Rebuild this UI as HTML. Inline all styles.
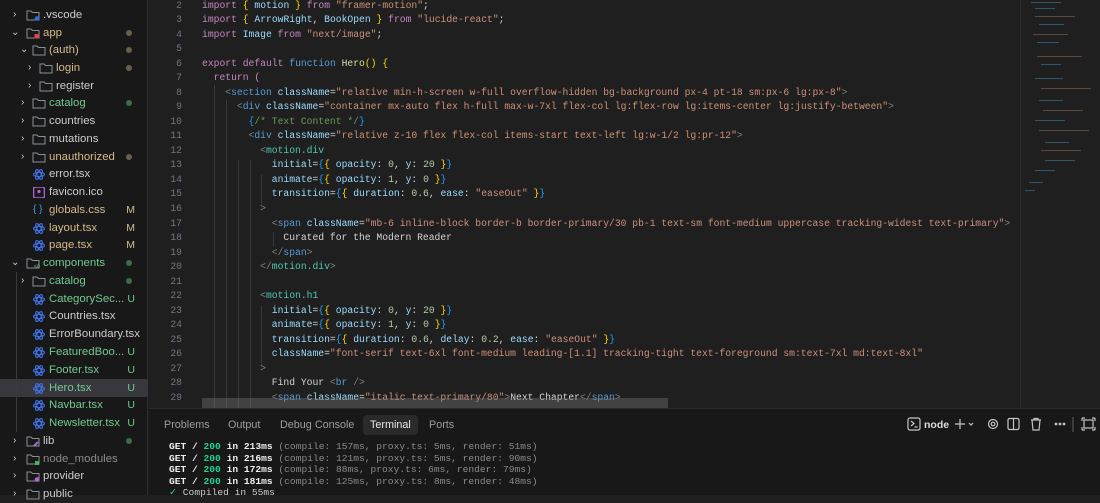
<!DOCTYPE html>
<html><head><meta charset="utf-8"><style>
*{margin:0;padding:0;box-sizing:border-box}
body{width:1100px;height:495px;overflow:hidden;background:#1f1f1f;font-family:"Liberation Sans",sans-serif;position:relative}
#side{position:absolute;left:0;top:0;width:148px;height:495px;background:#181818;border-right:1px solid #2b2b2b}
.r{position:absolute;left:0;width:148px;height:18px;font-size:11.4px;line-height:18px;color:#cccccc;white-space:nowrap}
.r .ch{position:absolute;font-size:10px;color:#ccc}
.r .ic{position:absolute;top:4px}
.r .t{position:absolute}
.r .b{position:absolute;right:13px;font-size:10.5px}
.r .d{position:absolute;right:16px;top:6px;width:6px;height:6px;border-radius:3px}
.tan{color:#d7b98a!important}.grn{color:#73c991!important}.gry{color:#8b8b8b!important}
#code{position:absolute;left:150px;top:0;width:870px;height:408px;overflow:hidden;font-family:"Liberation Mono",monospace;font-size:9.7px}
.ln{position:absolute;left:0;width:32px;text-align:right;color:#6e7681;height:14.52px;line-height:14.52px}
.cl{position:absolute;left:52px;white-space:pre;color:#d4d4d4;height:14.52px;line-height:14.52px}
.k{color:#c586c0}.bk{color:#569cd6}.y{color:#ffd700}.v{color:#9cdcfe}.s{color:#ce9178}.p{color:#808080}.c{color:#4ec9b0}.f{color:#dcdcaa}.n{color:#b5cea8}.cm{color:#6a9955}.bl{color:#179fff}
.g{position:absolute;width:1px;background:#3a3a3a}
#panel{position:absolute;left:149px;top:408px;width:951px;height:87px;background:#181818;border-top:1px solid #2b2b2b}
.tab{position:absolute;top:6px;font-size:10.8px;color:#9d9d9d;height:20px;line-height:20px}
.term{position:absolute;left:20px;font-family:"Liberation Mono",monospace;font-size:9.6px;color:#ccc;white-space:pre;line-height:11.5px}
.term b{color:#eee}
</style></head><body>
<div id="side">
<div class="r" style="top:-12px"><span class="t" style="left:43px;color:#888">client</span></div>
<div class="r" style="top:6px"><span class="ch" style="left:13px">›</span><svg class="ic" style="left:26px" width="14" height="11"><path d="M1 1h4l1.5 1.5H13V10H1z" fill="none" stroke="#8a8f98"/><circle cx="11" cy="8.5" r="2.3" fill="#2f6ee8"/></svg><span class="t" style="left:43px">.vscode</span></div>
<div class="r" style="top:24px"><span class="ch" style="left:11px">⌄</span><svg class="ic" style="left:26px" width="14" height="11"><path d="M1 1h4l1.5 1.5H13V10H1z" fill="none" stroke="#8a8f98"/><rect x="8.5" y="6" width="4.5" height="4.5" fill="#e0444c"/></svg><span class="t tan" style="left:43px">app</span><span class="d" style="background:#6b5f48"></span></div>
<div class="r" style="top:41px"><span class="ch" style="left:20px">⌄</span><svg class="ic" style="left:32px" width="14" height="11"><path d="M1 1h4l1.5 1.5H13V10H1z" fill="none" stroke="#8a8f98"/></svg><span class="t tan" style="left:49px">(auth)</span><span class="d" style="background:#6b5f48"></span></div>
<div class="r" style="top:59px"><span class="ch" style="left:28px">›</span><svg class="ic" style="left:39px" width="14" height="11"><path d="M1 1h4l1.5 1.5H13V10H1z" fill="none" stroke="#8a8f98"/></svg><span class="t tan" style="left:56px">login</span><span class="d" style="background:#6b5f48"></span></div>
<div class="r" style="top:77px"><span class="ch" style="left:28px">›</span><svg class="ic" style="left:39px" width="14" height="11"><path d="M1 1h4l1.5 1.5H13V10H1z" fill="none" stroke="#8a8f98"/></svg><span class="t" style="left:56px">register</span></div>
<div class="r" style="top:94px"><span class="ch" style="left:21px">›</span><svg class="ic" style="left:32px" width="14" height="11"><path d="M1 1h4l1.5 1.5H13V10H1z" fill="none" stroke="#8a8f98"/></svg><span class="t grn" style="left:49px">catalog</span><span class="d" style="background:#3e6b4b"></span></div>
<div class="r" style="top:112px"><span class="ch" style="left:21px">›</span><svg class="ic" style="left:32px" width="14" height="11"><path d="M1 1h4l1.5 1.5H13V10H1z" fill="none" stroke="#8a8f98"/></svg><span class="t" style="left:49px">countries</span></div>
<div class="r" style="top:130px"><span class="ch" style="left:21px">›</span><svg class="ic" style="left:32px" width="14" height="11"><path d="M1 1h4l1.5 1.5H13V10H1z" fill="none" stroke="#8a8f98"/></svg><span class="t" style="left:49px">mutations</span></div>
<div class="r" style="top:148px"><span class="ch" style="left:21px">›</span><svg class="ic" style="left:32px" width="14" height="11"><path d="M1 1h4l1.5 1.5H13V10H1z" fill="none" stroke="#8a8f98"/></svg><span class="t tan" style="left:49px">unauthorized</span><span class="d" style="background:#6b5f48"></span></div>
<div class="r" style="top:165px"><svg class="ic" style="left:33px" width="12" height="11"><g fill="none" stroke="#3d6fe0" stroke-width="1.2"><ellipse cx="6" cy="5.5" rx="5.5" ry="2.2"/><ellipse cx="6" cy="5.5" rx="5.5" ry="2.2" transform="rotate(60 6 5.5)"/><ellipse cx="6" cy="5.5" rx="5.5" ry="2.2" transform="rotate(-60 6 5.5)"/></g></svg><span class="t" style="left:49px">error.tsx</span></div>
<div class="r" style="top:183px"><svg class="ic" style="left:33px" width="12" height="11"><rect x="0.5" y="0" width="11" height="11" rx="2" fill="none" stroke="#b064e0" stroke-width="1.5"/><circle cx="6" cy="4.5" r="1.6" fill="#b064e0"/></svg><span class="t" style="left:49px">favicon.ico</span></div>
<div class="r" style="top:201px"><span class="t" style="left:33px;color:#3aa0e0;font-size:10px">{ }</span><span class="t tan" style="left:49px">globals.css</span><span class="b tan">M</span></div>
<div class="r" style="top:219px"><svg class="ic" style="left:33px" width="12" height="11"><g fill="none" stroke="#3d6fe0" stroke-width="1.2"><ellipse cx="6" cy="5.5" rx="5.5" ry="2.2"/><ellipse cx="6" cy="5.5" rx="5.5" ry="2.2" transform="rotate(60 6 5.5)"/><ellipse cx="6" cy="5.5" rx="5.5" ry="2.2" transform="rotate(-60 6 5.5)"/></g></svg><span class="t tan" style="left:49px">layout.tsx</span><span class="b tan">M</span></div>
<div class="r" style="top:236px"><svg class="ic" style="left:33px" width="12" height="11"><g fill="none" stroke="#3d6fe0" stroke-width="1.2"><ellipse cx="6" cy="5.5" rx="5.5" ry="2.2"/><ellipse cx="6" cy="5.5" rx="5.5" ry="2.2" transform="rotate(60 6 5.5)"/><ellipse cx="6" cy="5.5" rx="5.5" ry="2.2" transform="rotate(-60 6 5.5)"/></g></svg><span class="t tan" style="left:49px">page.tsx</span><span class="b tan">M</span></div>
<div class="r" style="top:254px"><span class="ch" style="left:11px">⌄</span><svg class="ic" style="left:26px" width="14" height="11"><path d="M1 1h4l1.5 1.5H13V10H1z" fill="none" stroke="#8a8f98"/><text x="8" y="10" font-size="5" fill="#73c991">&lt;/&gt;</text></svg><span class="t grn" style="left:43px">components</span><span class="d" style="background:#3e6b4b"></span></div>
<div class="r" style="top:272px"><span class="ch" style="left:21px">›</span><svg class="ic" style="left:32px" width="14" height="11"><path d="M1 1h4l1.5 1.5H13V10H1z" fill="none" stroke="#8a8f98"/></svg><span class="t grn" style="left:49px">catalog</span><span class="d" style="background:#3e6b4b"></span></div>
<div class="r" style="top:290px"><svg class="ic" style="left:33px" width="12" height="11"><g fill="none" stroke="#3d6fe0" stroke-width="1.2"><ellipse cx="6" cy="5.5" rx="5.5" ry="2.2"/><ellipse cx="6" cy="5.5" rx="5.5" ry="2.2" transform="rotate(60 6 5.5)"/><ellipse cx="6" cy="5.5" rx="5.5" ry="2.2" transform="rotate(-60 6 5.5)"/></g></svg><span class="t grn" style="left:49px">CategorySec...</span><span class="b grn">U</span></div>
<div class="r" style="top:307px"><svg class="ic" style="left:33px" width="12" height="11"><g fill="none" stroke="#3d6fe0" stroke-width="1.2"><ellipse cx="6" cy="5.5" rx="5.5" ry="2.2"/><ellipse cx="6" cy="5.5" rx="5.5" ry="2.2" transform="rotate(60 6 5.5)"/><ellipse cx="6" cy="5.5" rx="5.5" ry="2.2" transform="rotate(-60 6 5.5)"/></g></svg><span class="t" style="left:49px">Countries.tsx</span></div>
<div class="r" style="top:325px"><svg class="ic" style="left:33px" width="12" height="11"><g fill="none" stroke="#3d6fe0" stroke-width="1.2"><ellipse cx="6" cy="5.5" rx="5.5" ry="2.2"/><ellipse cx="6" cy="5.5" rx="5.5" ry="2.2" transform="rotate(60 6 5.5)"/><ellipse cx="6" cy="5.5" rx="5.5" ry="2.2" transform="rotate(-60 6 5.5)"/></g></svg><span class="t" style="left:49px">ErrorBoundary.tsx</span></div>
<div class="r" style="top:343px"><svg class="ic" style="left:33px" width="12" height="11"><g fill="none" stroke="#3d6fe0" stroke-width="1.2"><ellipse cx="6" cy="5.5" rx="5.5" ry="2.2"/><ellipse cx="6" cy="5.5" rx="5.5" ry="2.2" transform="rotate(60 6 5.5)"/><ellipse cx="6" cy="5.5" rx="5.5" ry="2.2" transform="rotate(-60 6 5.5)"/></g></svg><span class="t grn" style="left:49px">FeaturedBoo...</span><span class="b grn">U</span></div>
<div class="r" style="top:361px"><svg class="ic" style="left:33px" width="12" height="11"><g fill="none" stroke="#3d6fe0" stroke-width="1.2"><ellipse cx="6" cy="5.5" rx="5.5" ry="2.2"/><ellipse cx="6" cy="5.5" rx="5.5" ry="2.2" transform="rotate(60 6 5.5)"/><ellipse cx="6" cy="5.5" rx="5.5" ry="2.2" transform="rotate(-60 6 5.5)"/></g></svg><span class="t grn" style="left:49px">Footer.tsx</span><span class="b grn">U</span></div>
<div class="r" style="top:379px;background:#37373d"><svg class="ic" style="left:33px" width="12" height="11"><g fill="none" stroke="#3d6fe0" stroke-width="1.2"><ellipse cx="6" cy="5.5" rx="5.5" ry="2.2"/><ellipse cx="6" cy="5.5" rx="5.5" ry="2.2" transform="rotate(60 6 5.5)"/><ellipse cx="6" cy="5.5" rx="5.5" ry="2.2" transform="rotate(-60 6 5.5)"/></g></svg><span class="t grn" style="left:49px">Hero.tsx</span><span class="b grn">U</span></div>
<div class="r" style="top:396px"><svg class="ic" style="left:33px" width="12" height="11"><g fill="none" stroke="#3d6fe0" stroke-width="1.2"><ellipse cx="6" cy="5.5" rx="5.5" ry="2.2"/><ellipse cx="6" cy="5.5" rx="5.5" ry="2.2" transform="rotate(60 6 5.5)"/><ellipse cx="6" cy="5.5" rx="5.5" ry="2.2" transform="rotate(-60 6 5.5)"/></g></svg><span class="t grn" style="left:49px">Navbar.tsx</span><span class="b grn">U</span></div>
<div class="r" style="top:414px"><svg class="ic" style="left:33px" width="12" height="11"><g fill="none" stroke="#3d6fe0" stroke-width="1.2"><ellipse cx="6" cy="5.5" rx="5.5" ry="2.2"/><ellipse cx="6" cy="5.5" rx="5.5" ry="2.2" transform="rotate(60 6 5.5)"/><ellipse cx="6" cy="5.5" rx="5.5" ry="2.2" transform="rotate(-60 6 5.5)"/></g></svg><span class="t grn" style="left:49px">Newsletter.tsx</span><span class="b grn">U</span></div>
<div class="r" style="top:432px"><span class="ch" style="left:13px">›</span><svg class="ic" style="left:26px" width="14" height="11"><path d="M1 1h4l1.5 1.5H13V10H1z" fill="none" stroke="#8a8f98"/><path d="M8 10l4-4" stroke="#b064e0" stroke-width="2"/></svg><span class="t" style="left:43px">lib</span><span class="d" style="background:#3e6b4b"></span></div>
<div class="r" style="top:450px"><span class="ch" style="left:13px">›</span><svg class="ic" style="left:26px" width="14" height="11"><path d="M1 1h4l1.5 1.5H13V10H1z" fill="none" stroke="#8a8f98"/><rect x="9" y="7" width="4" height="4" fill="#3fb950"/></svg><span class="t gry" style="left:43px">node_modules</span></div>
<div class="r" style="top:467px"><span class="ch" style="left:13px">›</span><svg class="ic" style="left:26px" width="14" height="11"><path d="M1 1h4l1.5 1.5H13V10H1z" fill="none" stroke="#8a8f98"/><circle cx="11" cy="8.5" r="2.3" fill="#b064e0"/></svg><span class="t" style="left:43px">provider</span></div>
<div class="r" style="top:485px"><span class="ch" style="left:13px">›</span><svg class="ic" style="left:26px" width="14" height="11"><path d="M1 1h4l1.5 1.5H13V10H1z" fill="none" stroke="#8a8f98"/></svg><span class="t" style="left:43px">public</span></div>
<div style="position:absolute;left:16px;top:272px;width:1px;height:160px;background:#3a3a3a"></div>
</div>

<div id="code">
<div class="g" style="left:64px;top:85px;height:330px"></div>
<div class="g" style="left:76px;top:100px;height:320px"></div>
<div class="g" style="left:88px;top:160px;height:260px"></div>
<div class="g" style="left:100px;top:160px;height:260px"></div>
<div class="g" style="left:111px;top:175px;height:30px"></div>
<div class="g" style="left:123px;top:232px;height:14px"></div>
<div class="g" style="left:111px;top:306px;height:60px"></div>
<div id="lines"></div>
<div style="position:absolute;left:52px;top:398px;width:466px;height:10px;background:rgba(121,121,121,0.4)"></div>
</div>
<div style="position:absolute;left:1020px;top:0;width:1px;height:408px;background:#2b2b2b"></div>
<svg style="position:absolute;left:1021px;top:0" width="79" height="200">
<g fill="#3b6e8c" opacity="0.7">
<rect x="10" y="2" width="30" height="1"/><rect x="14" y="8" width="20" height="1"/><rect x="14" y="16" width="40" height="1" fill="#7a5a4a"/><rect x="18" y="24" width="25" height="1"/><rect x="12" y="34" width="35" height="1" fill="#7a5a4a"/><rect x="16" y="42" width="22" height="1"/><rect x="16" y="56" width="45" height="1" fill="#7a5a4a"/><rect x="20" y="64" width="20" height="1"/><rect x="14" y="78" width="28" height="1"/><rect x="20" y="88" width="50" height="1" fill="#7a5a4a"/><rect x="18" y="100" width="24" height="1"/><rect x="22" y="110" width="40" height="1" fill="#7a5a4a"/><rect x="14" y="120" width="30" height="1"/><rect x="18" y="130" width="50" height="1" fill="#7a5a4a"/><rect x="24" y="142" width="24" height="1"/><rect x="20" y="150" width="40" height="1" fill="#7a5a4a"/><rect x="24" y="160" width="30" height="1"/><rect x="14" y="170" width="20" height="1"/><rect x="8" y="182" width="14" height="1"/><rect x="4" y="190" width="10" height="1"/>
</g></svg>

<div id="panel">
<div class="tab" style="left:15px">Problems</div>
<div class="tab" style="left:79px">Output</div>
<div class="tab" style="left:131px">Debug Console</div>
<div class="tab" style="left:214px;background:#2a2a2a;color:#e7e7e7;padding:0 7px;border-radius:4px">Terminal</div>
<div class="tab" style="left:280px">Ports</div>
<div class="term" style="top:32px"><b>GET / <span style="color:#23d18b">200</span> in 213ms</b> <span style="color:#8b8b8b">(compile: 157ms, proxy.ts: 5ms, render: 51ms)</span>
<b>GET / <span style="color:#23d18b">200</span> in 216ms</b> <span style="color:#8b8b8b">(compile: 121ms, proxy.ts: 5ms, render: 90ms)</span>
<b>GET / <span style="color:#23d18b">200</span> in 172ms</b> <span style="color:#8b8b8b">(compile: 88ms, proxy.ts: 6ms, render: 79ms)</span>
<b>GET / <span style="color:#23d18b">200</span> in 181ms</b> <span style="color:#8b8b8b">(compile: 125ms, proxy.ts: 8ms, render: 48ms)</span>
<span style="color:#23d18b">✓</span> Compiled in 55ms</div>
<svg style="position:absolute;left:758px;top:8px" width="194" height="16" fill="none" stroke="#c5c5c5" stroke-width="1.2">
<rect x="1" y="1" width="12" height="12" rx="2"/><path d="M4 4l3 2.5L4 9M7.5 10h3"/>
<text x="17" y="11" fill="#ddd" stroke="none" font-size="10.5" font-family="Liberation Sans" font-weight="bold">node</text>
<path d="M53 2v10M48 7h10M62 6l2 2 2-2"/>
<circle cx="86" cy="7" r="4.5"/><circle cx="86" cy="7" r="1.8"/>
<rect x="101" y="1.5" width="11" height="11" rx="1.5"/><path d="M106.5 1.5v11"/>
<path d="M124 3h10M127 3V1.5h4V3M125 3l1 10h6l1-10"/>
<circle cx="149" cy="7" r=".8" fill="#c5c5c5"/><circle cx="153" cy="7" r=".8" fill="#c5c5c5"/><circle cx="157" cy="7" r=".8" fill="#c5c5c5"/>
<path d="M166 0v15" stroke="#555"/>
<rect x="177" y="3" width="9" height="8"/><path d="M175 1h3M175 1v3M188 1h-3M188 1v3M175 13h3M175 13v-3M188 13h-3M188 13v-3"/>
</svg>
</div>

<script>
const L=[
[1,`<span class="k">"use client"</span>;`],
[2,`<span class="k">import</span> <span class="y">{</span> <span class="v">motion</span> <span class="y">}</span> <span class="k">from</span> <span class="s">"framer-motion"</span>;`],
[3,`<span class="k">import</span> <span class="y">{</span> <span class="v">ArrowRight</span>, <span class="v">BookOpen</span> <span class="y">}</span> <span class="k">from</span> <span class="s">"lucide-react"</span>;`],
[4,`<span class="k">import</span> <span class="v">Image</span> <span class="k">from</span> <span class="s">"next/image"</span>;`],
[5,``],
[6,`<span class="k">export</span> <span class="k">default</span> <span class="bk">function</span> <span class="f">Hero</span><span class="y">()</span> <span class="y">{</span>`],
[7,`  <span class="k">return</span> <span class="k">(</span>`],
[8,`    <span class="p">&lt;</span><span class="bk">section</span> <span class="v">className</span>=<span class="s">"relative min-h-screen w-full overflow-hidden bg-background px-4 pt-18 sm:px-6 lg:px-8"</span><span class="p">&gt;</span>`],
[9,`      <span class="p">&lt;</span><span class="bk">div</span> <span class="v">className</span>=<span class="s">"container mx-auto flex h-full max-w-7xl flex-col lg:flex-row lg:items-center lg:justify-between"</span><span class="p">&gt;</span>`],
[10,`        <span class="bl">{</span><span class="cm">/* Text Content */</span><span class="bl">}</span>`],
[11,`        <span class="p">&lt;</span><span class="bk">div</span> <span class="v">className</span>=<span class="s">"relative z-10 flex flex-col items-start text-left lg:w-1/2 lg:pr-12"</span><span class="p">&gt;</span>`],
[12,`          <span class="p">&lt;</span><span class="c">motion.div</span>`],
[13,`            <span class="v">initial</span>=<span class="bl">{</span><span class="y">{</span> <span class="v">opacity</span>: <span class="n">0</span>, <span class="v">y</span>: <span class="n">20</span> <span class="y">}</span><span class="bl">}</span>`],
[14,`            <span class="v">animate</span>=<span class="bl">{</span><span class="y">{</span> <span class="v">opacity</span>: <span class="n">1</span>, <span class="v">y</span>: <span class="n">0</span> <span class="y">}</span><span class="bl">}</span>`],
[15,`            <span class="v">transition</span>=<span class="bl">{</span><span class="y">{</span> <span class="v">duration</span>: <span class="n">0.6</span>, <span class="v">ease</span>: <span class="s">"easeOut"</span> <span class="y">}</span><span class="bl">}</span>`],
[16,`          <span class="p">&gt;</span>`],
[17,`            <span class="p">&lt;</span><span class="bk">span</span> <span class="v">className</span>=<span class="s">"mb-6 inline-block border-b border-primary/30 pb-1 text-sm font-medium uppercase tracking-widest text-primary"</span><span class="p">&gt;</span>`],
[18,`              Curated for the Modern Reader`],
[19,`            <span class="p">&lt;/</span><span class="bk">span</span><span class="p">&gt;</span>`],
[20,`          <span class="p">&lt;/</span><span class="c">motion.div</span><span class="p">&gt;</span>`],
[21,``],
[22,`          <span class="p">&lt;</span><span class="c">motion.h1</span>`],
[23,`            <span class="v">initial</span>=<span class="bl">{</span><span class="y">{</span> <span class="v">opacity</span>: <span class="n">0</span>, <span class="v">y</span>: <span class="n">20</span> <span class="y">}</span><span class="bl">}</span>`],
[24,`            <span class="v">animate</span>=<span class="bl">{</span><span class="y">{</span> <span class="v">opacity</span>: <span class="n">1</span>, <span class="v">y</span>: <span class="n">0</span> <span class="y">}</span><span class="bl">}</span>`],
[25,`            <span class="v">transition</span>=<span class="bl">{</span><span class="y">{</span> <span class="v">duration</span>: <span class="n">0.6</span>, <span class="v">delay</span>: <span class="n">0.2</span>, <span class="v">ease</span>: <span class="s">"easeOut"</span> <span class="y">}</span><span class="bl">}</span>`],
[26,`            <span class="v">className</span>=<span class="s">"font-serif text-6xl font-medium leading-[1.1] tracking-tight text-foreground sm:text-7xl md:text-8xl"</span>`],
[27,`          <span class="p">&gt;</span>`],
[28,`            Find Your <span class="p">&lt;</span><span class="bk">br</span> <span class="p">/&gt;</span>`],
[29,`            <span class="p">&lt;</span><span class="bk">span</span> <span class="v">className</span>=<span class="s">"italic text-primary/80"</span><span class="p">&gt;</span>Next Chapter<span class="p">&lt;/</span><span class="bk">span</span><span class="p">&gt;</span>`]
];
let h='';
for(const [n,t] of L){const top=(n-2)*14.52-1.3;
h+=`<div class="ln" style="top:${top}px">${n}</div><div class="cl" style="top:${top}px">${t}</div>`;}
document.getElementById('lines').innerHTML=h;
</script>
</body></html>
